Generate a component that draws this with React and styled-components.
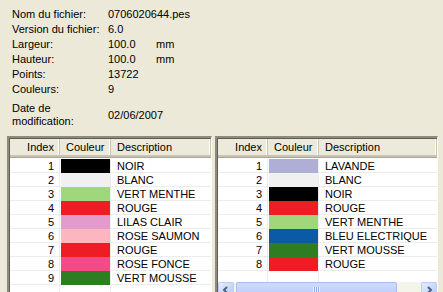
import React from 'react'
import styled, { createGlobalStyle } from 'styled-components'

const GlobalStyle = createGlobalStyle`
html, body {
  margin: 0;
  padding: 0;
  height: 100%;
  background: #ece9d8;
  overflow: hidden;
}
body {
  font-family: "Liberation Sans", Arial, sans-serif;
  font-size: 11px;
  color: #000;
}
`

const Page = styled.div`
  width: 443px;
  height: 292px;
  overflow: hidden;
  background: #ece9d8;
`

const InfoGrid = styled.div`
  display: grid;
  grid-template-columns: 96px 48px auto;
  padding: 7px 0 0 12px;
  line-height: 15px;
`

const Label = styled.div`
  grid-column: 1;
  align-self: center;
  ${p => p.$tall && 'margin-top: 5px; line-height: 13px;'}
`

const Value = styled.div`
  grid-column: ${p => (p.$span ? '2 / 4' : '2')};
  align-self: center;
  ${p => p.$tall && 'margin-top: 5px;'}
`

const Unit = styled.div`
  grid-column: 3;
  align-self: center;
`

const Lists = styled.div`
  display: flex;
  gap: 3px;
  padding: 0 5px 0 7px;
  margin-top: 8px;
`

const Panel = styled.div`
  width: ${p => p.$width}px;
  height: 164px;
  flex: none;
  display: flex;
  flex-direction: column;
  background: #fff;
  border-style: solid;
  border-width: 2px 1px 1px 2px;
  border-color: #8e8b7e #fff #fff #8e8b7e;
  box-shadow: inset 1px 1px 0 #5f5d55;
  box-sizing: border-box;
  overflow: hidden;
`

const HeaderRow = styled.div`
  display: grid;
  grid-template-columns: 50px 51px 1fr;
  height: 16px;
  margin-left: 1px;
  margin-top: 1px;
  background: #ebeadb;
  border-bottom: 2px solid #c7c4b5;
  box-shadow: 0 1px 0 #a9a696;
`

const HeaderCell = styled.div`
  line-height: 17px;
  text-align: ${p => p.$align || 'left'};
  padding: ${p => (p.$align === 'right' ? '0 5px 0 0' : '0 0 0 6px')};
  border-right: 1px solid #c7c5b2;
  box-shadow: inset -1px 0 0 #fff;
  white-space: nowrap;
  overflow: hidden;
`

const Body = styled.div`
  flex: 1;
  padding-top: 2px;
  margin-left: 1px;
  overflow: hidden;
`

const Row = styled.div`
  display: grid;
  grid-template-columns: 50px 51px 1fr;
  height: 14px;
  border-bottom: 1px solid #ececec;
  box-sizing: border-box;
`

const IndexCell = styled.div`
  text-align: right;
  padding-right: 5px;
  line-height: 14px;
  border-right: 1px solid #ececec;
`

const Swatch = styled.div`
  margin-left: 1px;
  background: ${p => p.$color || 'transparent'};
  border-right: 1px solid #ececec;
`

const DescCell = styled.div`
  padding-left: 6px;
  line-height: 14px;
  white-space: nowrap;
`

const ScrollBar = styled.div`
  display: flex;
  height: 17px;
  margin-left: 1px;
  background: #f5f4ea;
  flex: none;
`

const ScrollButton = styled.div`
  width: 16px;
  height: 16px;
  flex: none;
  display: flex;
  align-items: center;
  justify-content: center;
  box-sizing: border-box;
  border: 1px solid #b9cdf6;
  border-radius: 2px;
  background: linear-gradient(135deg, #e5edfd 0%, #c8d8fb 60%, #b4c8f6 100%);
`

const Track = styled.div`
  flex: 1;
  display: flex;
  padding: 0 2px;
`

const Thumb = styled.div`
  width: ${p => p.$width}px;
  height: 16px;
  box-sizing: border-box;
  border: 1px solid #a8bef0;
  border-radius: 2px;
  background: linear-gradient(to bottom, #cfdcfd 0%, #c3d3fc 50%, #b8cbf8 100%);
  display: flex;
  align-items: center;
  justify-content: center;
`

const Grip = styled.div`
  width: 7px;
  height: 7px;
  background: repeating-linear-gradient(to right, #eef3fe 0 1px, #8faaf0 1px 2px);
`

const leftColors = [
  ['#000000', 'NOIR'],
  ['#f0f0f0', 'BLANC'],
  ['#a0d77c', 'VERT MENTHE'],
  ['#ee1c24', 'ROUGE'],
  ['#e39bcb', 'LILAS CLAIR'],
  ['#fbb6c0', 'ROSE SAUMON'],
  ['#ee1c24', 'ROUGE'],
  ['#f24b88', 'ROSE FONCE'],
  ['#2e7d22', 'VERT MOUSSE'],
]

const rightColors = [
  ['#afafd6', 'LAVANDE'],
  ['#f0f0f0', 'BLANC'],
  ['#000000', 'NOIR'],
  ['#ee1c24', 'ROUGE'],
  ['#a0d77c', 'VERT MENTHE'],
  ['#0b5aa8', 'BLEU ELECTRIQUE'],
  ['#2e7d22', 'VERT MOUSSE'],
  ['#ee1c24', 'ROUGE'],
]

const Arrow = ({ dir }) => (
  <svg width="8" height="8" viewBox="0 0 8 8">
    <path
      d={dir === 'left' ? 'M5 1 L2 4 L5 7' : 'M3 1 L6 4 L3 7'}
      fill="none"
      stroke="#4d6185"
      strokeWidth="2"
    />
  </svg>
)

const ColorList = ({ width, colors, emptyRows, scroll }) => (
  <Panel $width={width}>
    <HeaderRow>
      <HeaderCell $align="right">Index</HeaderCell>
      <HeaderCell>Couleur</HeaderCell>
      <HeaderCell>Description</HeaderCell>
    </HeaderRow>
    <Body>
      {colors.map(([color, name], i) => (
        <Row key={i}>
          <IndexCell>{i + 1}</IndexCell>
          <Swatch $color={color} />
          <DescCell>{name}</DescCell>
        </Row>
      ))}
      {Array.from({ length: emptyRows }).map((_, i) => (
        <Row key={'e' + i}>
          <IndexCell />
          <Swatch />
          <DescCell />
        </Row>
      ))}
    </Body>
    {scroll && (
      <ScrollBar>
        <ScrollButton>
          <Arrow dir="left" />
        </ScrollButton>
        <Track>
          <Thumb $width={161}>
            <Grip />
          </Thumb>
        </Track>
        <ScrollButton>
          <Arrow dir="right" />
        </ScrollButton>
      </ScrollBar>
    )}
  </Panel>
)

const App = () => {
  return (
    <>
      <GlobalStyle />
      <Page>
        <InfoGrid>
          <Label>Nom du fichier:</Label>
          <Value $span>0706020644.pes</Value>
          <Label>Version du fichier:</Label>
          <Value $span>6.0</Value>
          <Label>Largeur:</Label>
          <Value>100.0</Value>
          <Unit>mm</Unit>
          <Label>Hauteur:</Label>
          <Value>100.0</Value>
          <Unit>mm</Unit>
          <Label>Points:</Label>
          <Value $span>13722</Value>
          <Label>Couleurs:</Label>
          <Value $span>9</Value>
          <Label $tall>
            Date de
            <br />
            modification:
          </Label>
          <Value $span $tall>02/06/2007</Value>
        </InfoGrid>
        <Lists>
          <ColorList width={205} colors={leftColors} emptyRows={2} />
          <ColorList width={223} colors={rightColors} emptyRows={1} scroll />
        </Lists>
      </Page>
    </>
  )
}

export default App
